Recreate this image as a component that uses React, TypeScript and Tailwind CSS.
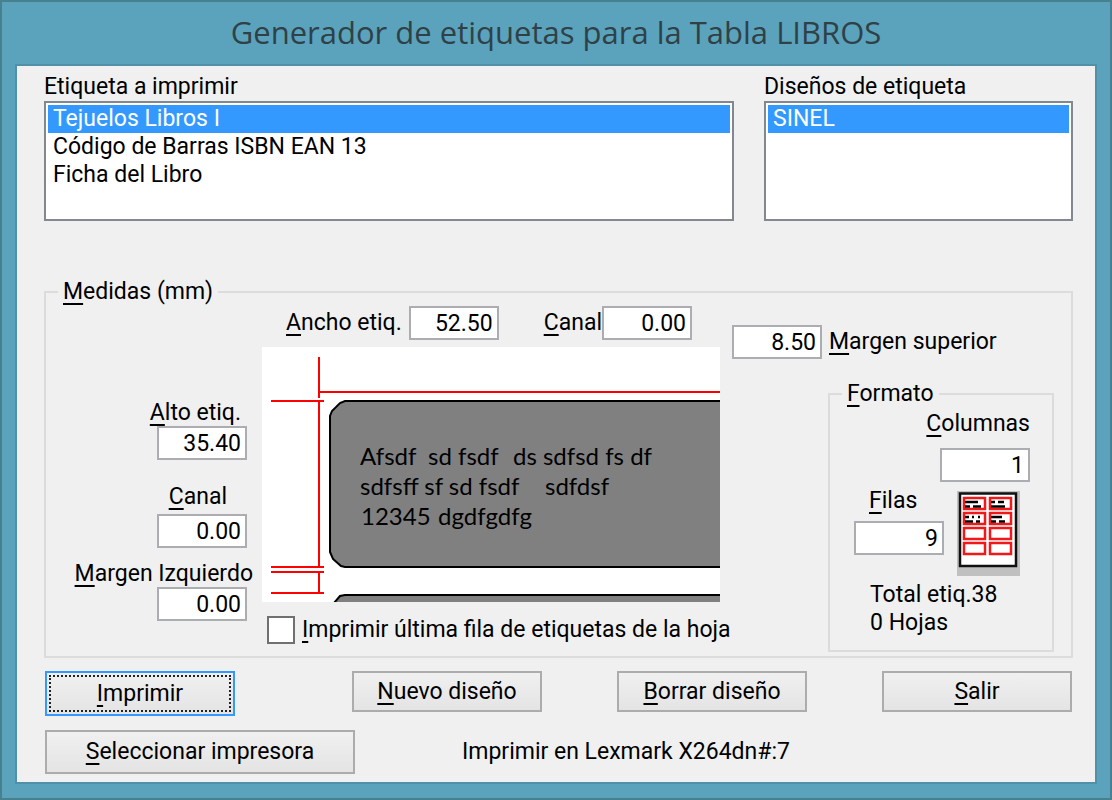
import { useId, useState } from 'react';
import type { ReactNode } from 'react';
import { clsx } from 'clsx';

const LABELS = ['Tejuelos Libros I', 'Código de Barras ISBN EAN 13', 'Ficha del Libro'];
const DESIGNS = ['SINEL'];

/** Caption whose first letter is the keyboard accelerator. */
function Mnemonic({ text }: { text: string }) {
  return (
    <>
      <u className="decoration-2 underline-offset-4 [text-decoration-skip-ink:none]">{text[0]}</u>
      {text.slice(1)}
    </>
  );
}

interface ListBoxProps {
  label: string;
  items: string[];
}

function ListBox({ label, items }: ListBoxProps) {
  const id = useId();
  return (
    <div className="flex min-w-0 flex-col">
      <label htmlFor={id} className="leading-7">
        {label}
      </label>
      <select
        id={id}
        size={4}
        defaultValue={items[0]}
        className="h-[120px] w-full overflow-hidden border-2 border-[#828790] bg-white p-0.5 outline-none"
      >
        {items.map((item) => (
          <option
            key={item}
            className="h-7 min-h-0 px-[5px] py-0 leading-7 checked:bg-[linear-gradient(#3399ff,#3399ff)] checked:[-webkit-text-fill-color:white]"
          >
            {item}
          </option>
        ))}
      </select>
    </div>
  );
}

interface NumberFieldProps {
  label: string;
  value: string;
  className?: string;
  labelClassName?: string;
  inputClassName?: string;
}

function NumberField({ label, value, className, labelClassName, inputClassName }: NumberFieldProps) {
  const id = useId();
  return (
    <div className={clsx('flex', className)}>
      <label htmlFor={id} className={clsx('leading-[26px] whitespace-nowrap', labelClassName)}>
        <Mnemonic text={label} />
      </label>
      <input
        id={id}
        type="text"
        inputMode="decimal"
        defaultValue={value}
        className={clsx(
          'h-[34px] w-[90px] shrink-0 border-2 border-[#abadb3] bg-white pr-1 text-right outline-none',
          inputClassName
        )}
      />
    </div>
  );
}

interface PushButtonProps {
  children: ReactNode;
  isDefault?: boolean;
  className?: string;
  onClick?: () => void;
}

function PushButton({ children, isDefault, className, onClick }: PushButtonProps) {
  return (
    <button
      type="button"
      onClick={onClick}
      className={clsx(
        'border-2 bg-linear-to-b from-[#f0f0f0] to-[#e4e4e4] whitespace-nowrap',
        isDefault ? 'border-[#3399ff] p-0.5' : 'border-[#acacac]',
        className
      )}
    >
      {children}
    </button>
  );
}

function LabelPreview() {
  return (
    <svg
      viewBox="0 0 458 255"
      preserveAspectRatio="xMinYMin slice"
      className="h-[255px] w-full bg-white"
      role="img"
      aria-label="Vista de la etiqueta"
    >
      <path
        d="M900 54H83L78 56L70 64L68 69V205L71 212L79 219L83 220H900Z"
        fill="#808080"
        stroke="#000"
        strokeWidth="2"
      />
      <path d="M900 248H83L78 249L72 256H900Z" fill="#808080" stroke="#000" strokeWidth="2" />
      <g stroke="#f00" strokeWidth="2">
        <path d="M57 10V51M57 45H900" />
        <path d="M9 54H62M57 54V219M9 220H62M9 225H62M57 225V245M9 246H62" />
      </g>
      <g className="font-['Lato',sans-serif] text-[24px]">
        <text x="98" y="118">Afsdf</text>
        <text x="166" y="118">sd fsdf</text>
        <text x="251" y="118">ds sdfsd fs df</text>
        <text x="98" y="148">sdfsff sf sd fsdf</text>
        <text x="283" y="148">sdfdsf</text>
        <text x="99" y="178">12345</text>
        <text x="176" y="178">dgdfgdfg</text>
      </g>
    </svg>
  );
}

function SheetIcon() {
  return (
    <svg width="63" height="85" viewBox="0 0 63 85" aria-hidden>
      <path d="M0 0H63V85H0Z" fill="#c0c0c0" />
      <path d="M3 2.500H59V75H3Z" fill="#fff" stroke="#101010" strokeWidth="2.500" />
      <g fill="none" stroke="#f01818" strokeWidth="2.500">
        {[7, 22, 37, 52].map((y) => (
          <path key={y} d={`M7 ${y}H28V${y + 11}H7ZM33 ${y}H54V${y + 11}H33Z`} />
        ))}
      </g>
      <path
        d="M8 11H21M8 15.500H13M16 15.500H24M34 11H38M41 11H47M34 15.500H48M8 26H12M15 26H17M21 26H23M8 30.500H16M19 30.500H23M34 26H45M34 30.500H39M42 30.500H48"
        stroke="#000"
        strokeWidth="2.500"
      />
    </svg>
  );
}

export default function App() {
  const [lastRow, setLastRow] = useState(false);

  return (
    <main className="flex min-h-screen flex-col border-2 border-[#47808f] bg-[#5ba3bc] px-[15px] pb-4 font-['Roboto',sans-serif] text-[23px] leading-8 text-black">
      <h1 className="flex h-16 items-center justify-center pb-1 font-['Open_Sans',sans-serif] text-[31px] text-[#2f4147]">
        Generador de etiquetas para la Tabla LIBROS
      </h1>

      <div className="flex-1 bg-[#f0f0f0] pt-[7px] pr-[22px] pb-2 pl-[27px] outline-2 outline-[#5091a7]">
        <div className="grid grid-cols-[690fr_309fr] gap-[30px]">
          <ListBox label="Etiqueta a imprimir" items={LABELS} />
          <ListBox label="Diseños de etiqueta" items={DESIGNS} />
        </div>

        <fieldset className="mt-[57px] flex h-[380px] min-w-0 border-2 border-[#dcdcdc]">
          <legend className="ml-3 px-[5px] leading-7">
            <Mnemonic text="Medidas (mm)" />
          </legend>

          <div className="flex w-[207px] shrink-0 flex-col pt-[94px]">
            <NumberField
              label="Alto etiq."
              value="35.40"
              className="flex-col items-end"
              labelClassName="mr-3"
              inputClassName="mr-1.5"
            />
            <NumberField
              label="Canal"
              value="0.00"
              className="mt-6 flex-col items-end gap-1"
              labelClassName="mr-[26px]"
              inputClassName="mr-1.5"
            />
            <NumberField
              label="Margen Izquierdo"
              value="0.00"
              className="mt-[13px] flex-col items-end"
              inputClassName="mr-1.5"
            />
          </div>

          <div className="ml-[9px] flex min-w-0 flex-1 flex-col">
            <div className="flex pl-6">
              <NumberField label="Ancho etiq." value="52.50" className="items-center gap-[7px]" />
              <NumberField label="Canal" value="0.00" className="ml-[45px] items-center" />
            </div>
            <div className="mt-[7px]">
              <LabelPreview />
            </div>
            <label className="mt-3 flex items-center gap-[7px] pl-[5px] leading-8 whitespace-nowrap">
              <input
                type="checkbox"
                checked={lastRow}
                onChange={(e) => setLastRow(e.target.checked)}
                className="size-7 shrink-0 appearance-none border-2 border-[#707070] bg-white checked:bg-[#707070] checked:bg-clip-content checked:p-1"
              />
              <span>
                <Mnemonic text="Imprimir última fila de etiquetas de la hoja" />
              </span>
            </label>
          </div>

          <div className="ml-3 flex w-[339px] shrink-0 flex-col pt-[19px]">
            <NumberField
              label="Margen superior"
              value="8.50"
              className="flex-row-reverse items-center justify-end gap-[7px]"
            />
            <fieldset className="mt-[21px] mr-[17px] ml-24 h-[272px] min-w-0 border-2 border-[#dcdcdc]">
              <legend className="ml-3 px-[5px] leading-7">
                <Mnemonic text="Formato" />
              </legend>
              <NumberField
                label="Columnas"
                value="1"
                className="flex-col items-end gap-[11px] pt-[3px] pr-[22px]"
              />
              <div className="mt-[6px] flex items-start gap-[13px] pl-6">
                <NumberField
                  label="Filas"
                  value="9"
                  className="flex-col gap-[7px]"
                  labelClassName="ml-[15px]"
                />
                <div className="mt-[3px]">
                  <SheetIcon />
                </div>
              </div>
              <p className="mt-[5px] pl-10 leading-7">
                Total etiq.38
                <br />0 Hojas
              </p>
            </fieldset>
          </div>
        </fieldset>

        <div className="mt-[13px] flex items-start px-px">
          <PushButton isDefault className="h-[45px] w-[190px]">
            <span className="flex h-full items-center justify-center border-2 border-dotted border-[#222]">
              <span>
                <Mnemonic text="Imprimir" />
              </span>
            </span>
          </PushButton>
          <div className="ml-auto flex gap-[75px]">
            <PushButton className="h-[41px] w-[190px]">
              <Mnemonic text="Nuevo diseño" />
            </PushButton>
            <PushButton className="h-[41px] w-[190px]">
              <Mnemonic text="Borrar diseño" />
            </PushButton>
            <PushButton className="h-[41px] w-[190px]">
              <Mnemonic text="Salir" />
            </PushButton>
          </div>
        </div>

        <div className="mt-[14px] flex items-center gap-[107px] pl-px">
          <PushButton className="h-11 w-[310px]">
            <Mnemonic text="Seleccionar impresora" />
          </PushButton>
          <p>Imprimir en Lexmark X264dn#:7</p>
        </div>
      </div>
    </main>
  );
}
